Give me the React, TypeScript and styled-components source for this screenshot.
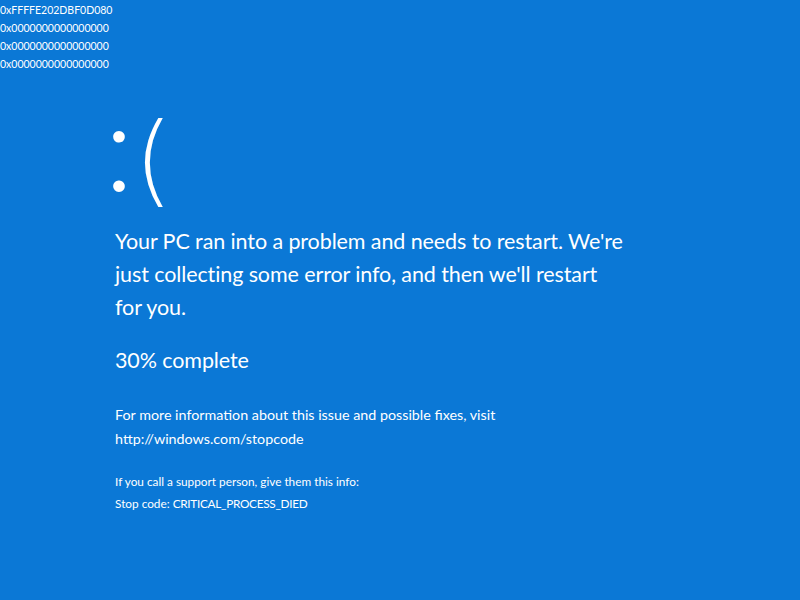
import React from "react";
import styled, { createGlobalStyle } from "styled-components";

const Global = createGlobalStyle`
  html, body { margin: 0; padding: 0; background: #0b78d6; }
  body { font-family: "Lato", "Open Sans", sans-serif; color: #fff; }
`;

const Screen = styled.div`
  width: 800px;
  height: 600px;
  background: #0b78d6;
  display: flex;
  flex-direction: column;
  overflow: hidden;
`;

const HexBlock = styled.div`
  display: flex;
  flex-direction: column;
  padding-top: 1px;
`;

const HexLine = styled.div`
  font-size: 10.5px;
  line-height: 18px;
  height: 18px;
`;

const Content = styled.div`
  display: flex;
  flex-direction: column;
  padding-left: 115px;
`;

const Face = styled.div`
  display: flex;
  align-items: baseline;
  height: 152px;
  line-height: 1;
`;

const Colon = styled.span`
  font-size: 125px;
  font-weight: 300;
  margin-left: -11px;
  line-height: 140px;
`;

const Paren = styled.span`
  position: relative;
  top: 3px;
  font-family: "DejaVu Sans", sans-serif;
  font-weight: 200;
  font-size: 100px;
`;

const Headline = styled.p`
  margin: 0;
  font-size: 21.5px;
  line-height: 33px;
  letter-spacing: -0.1px;
  white-space: nowrap;
`;

const Progress = styled.p`
  margin: 20px 0 0;
  font-size: 21.5px;
  line-height: 33px;
  letter-spacing: -0.1px;
`;

const Info = styled.p<{ $top: number }>`
  margin: ${(p) => p.$top}px 0 0;
  font-size: 14.3px;
  line-height: 24px;
`;

const Small = styled.p<{ $top: number }>`
  margin: ${(p) => p.$top}px 0 0;
  font-size: 11.8px;
  line-height: 22px;
`;

const Code = styled.span`
  letter-spacing: -0.3px;
`;

export default function App() {
  const hex = ["0xFFFFE202DBF0D080", "0x0000000000000000", "0x0000000000000000", "0x0000000000000000"];
  return (
    <>
      <Global />
      <Screen>
        <HexBlock>
          {hex.map((h, i) => (
            <HexLine key={i}>{h}</HexLine>
          ))}
        </HexBlock>
        <Content>
          <Face>
            <Colon>:</Colon>
            <Paren>(</Paren>
          </Face>
          <Headline>
            Your PC ran into a problem and needs to restart. We're
            <br />
            just collecting some error info, and then we'll restart
            <br />
            for you.
          </Headline>
          <Progress>30% complete</Progress>
          <Info $top={26}>
            For more information about this issue and possible fixes, visit
            <br />
            http://windows.com/stopcode
          </Info>
          <Small $top={20}>
            If you call a support person, give them this info:
            <br />
            Stop code: <Code>CRITICAL_PROCESS_DIED</Code>
          </Small>
        </Content>
      </Screen>
    </>
  );
}
